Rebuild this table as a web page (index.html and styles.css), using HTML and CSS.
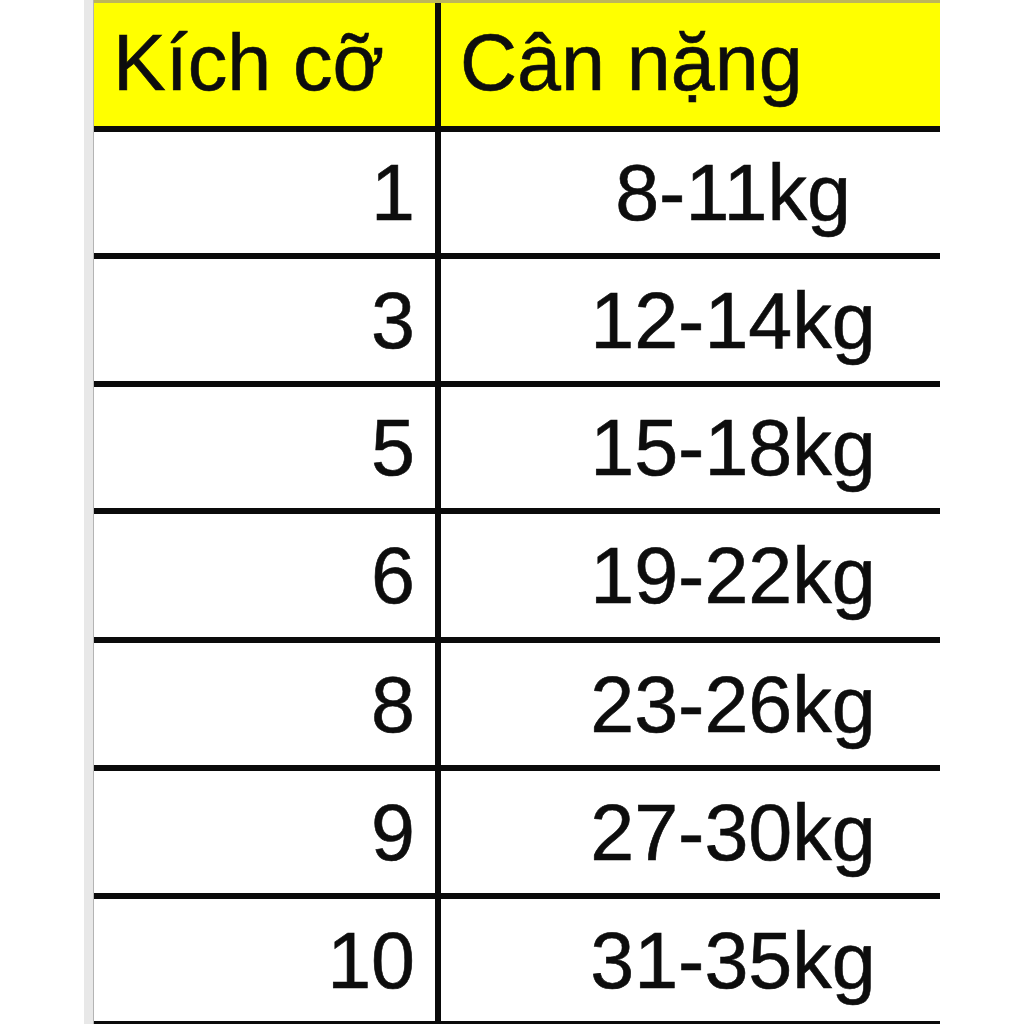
FILE: index.html
```html
<!DOCTYPE html>
<html lang="vi">
<head>
<meta charset="utf-8">
<title>Bảng kích cỡ</title>
<link rel="stylesheet" href="styles.css">
</head>
<body>
<div class="page">
  <div class="gutter"></div>
  <div class="sheet">
    <div class="row head">
      <div class="cell c1">Kích cỡ</div>
      <div class="cell c2">Cân nặng</div>
    </div>
    <div class="row r1">
      <div class="cell c1 num">1</div>
      <div class="cell c2 val">8-11kg</div>
    </div>
    <div class="row r2">
      <div class="cell c1 num">3</div>
      <div class="cell c2 val">12-14kg</div>
    </div>
    <div class="row r3">
      <div class="cell c1 num">5</div>
      <div class="cell c2 val">15-18kg</div>
    </div>
    <div class="row r4">
      <div class="cell c1 num">6</div>
      <div class="cell c2 val">19-22kg</div>
    </div>
    <div class="row r5">
      <div class="cell c1 num">8</div>
      <div class="cell c2 val">23-26kg</div>
    </div>
    <div class="row r6">
      <div class="cell c1 num">9</div>
      <div class="cell c2 val">27-30kg</div>
    </div>
    <div class="row r7">
      <div class="cell c1 num">10</div>
      <div class="cell c2 val">31-35kg</div>
    </div>
  </div>
</div>
</body>
</html>
```
FILE: styles.css
```css
* { box-sizing: border-box; }
html, body { margin: 0; padding: 0; background: #ffffff; }
body {
  width: 1024px;
  height: 1024px;
  overflow: hidden;
  font-family: "Liberation Sans", Arial, sans-serif;
  color: #0d0d0d;
}
.page {
  display: flex;
  align-items: flex-start;
  height: 1024px;
}
.gutter {
  margin-left: 84px;
  width: 10px;
  height: 1024px;
  background: #e8e8e8;
  border-right: 1px solid #b4b4b4;
}
.sheet {
  width: 846px;
  border-top: 3px solid #bdb65a;
  display: flex;
  flex-direction: column;
}
.row {
  display: grid;
  grid-template-columns: 347px 499px;
  height: 128px;
  border-bottom: 6px solid #0a0a0a;
}
.row.head { height: 129px; background: #ffff00; }
.row.r1 { height: 127px; }
.row.r2 { height: 128px; }
.row.r3 { height: 127px; }
.row.r4 { height: 129px; }
.row.r5 { height: 128px; }
.row.r6 { height: 128px; }
.row.r7 { height: 128px; }
.cell {
  display: flex;
  align-items: center;
  font-size: 79px;
  line-height: 1;
  white-space: nowrap;
  -webkit-text-stroke: 0.6px #0d0d0d;
}
.head .cell { padding-bottom: 4px; }
.c1 {
  border-right: 6px solid #0a0a0a;
  padding-left: 19px;
}
.c2 { padding-left: 19px; }
.num {
  justify-content: flex-end;
  padding-right: 20px;
}
.val {
  justify-content: center;
  padding-left: 85px;
}
```
